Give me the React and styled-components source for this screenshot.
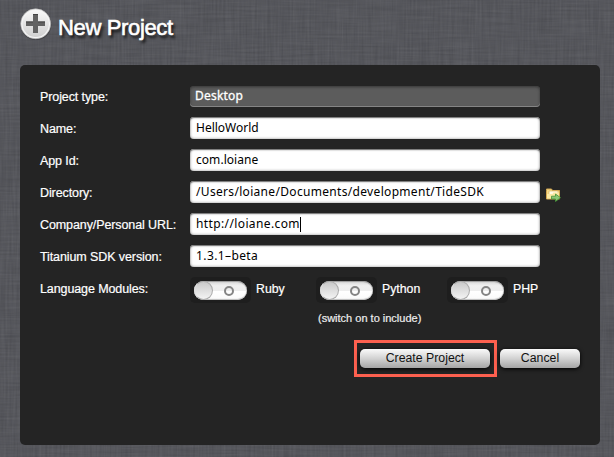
import React from "react";
import styled, { createGlobalStyle } from "styled-components";

const Global = createGlobalStyle`
  * { box-sizing: border-box; }
  html, body { margin: 0; padding: 0; }
  body { overflow: hidden; background: #55565b; font-family: "Liberation Sans", Arial, sans-serif; }
`;

const Page = styled.div`
  position: relative;
  isolation: isolate;
  width: 614px;
  height: 457px;
  padding: 0 14px 12px 20px;
  display: flex;
  flex-direction: column;
  background: #55565b;
`;

const Linen = styled.svg`
  position: absolute;
  inset: 0;
  z-index: -1;
`;

const Header = styled.header`
  height: 65px;
  flex: none;
  display: flex;
  align-items: flex-start;
  padding-top: 7px;
  gap: 6px;
`;

const Title = styled.h1`
  margin: 8px 0 0;
  font-size: 22px;
  line-height: 25px;
  font-weight: 400;
  letter-spacing: -0.35px;
  color: #fff;
  -webkit-text-stroke: 0.6px #fff;
  text-shadow: 2px 3px 3px rgba(0,0,0,.9);
  white-space: nowrap;
`;

const Panel = styled.main`
  flex: 1;
  border-radius: 5px;
  background: #242424;
  padding: 16px 20px 0;
`;

const Row = styled.div`
  height: 32px;
  display: flex;
  align-items: center;
`;

const Label = styled.label`
  width: 150px;
  flex: none;
  font-size: 12.5px;
  line-height: 16px;
  color: #fff;
  -webkit-text-stroke: 0.2px #fff;
  letter-spacing: -0.1px;
  white-space: nowrap;
`;

const Field = styled.div`
  width: 350px;
  height: ${(p) => (p.$dim ? 21 : 22)}px;
  margin-top: ${(p) => (p.$dim ? -1 : -2)}px;
  display: flex;
  align-items: center;
  padding: ${(p) => (p.$dim ? "0 5px 2px" : "0 6px")};
  border-radius: 4px;
  font: 12px/16px "Noto Sans", "Open Sans", sans-serif;
  letter-spacing: ${(p) => p.$track || 0}px;
  white-space: nowrap;
  color: ${(p) => (p.$dim ? "#fff" : "#000")};
  -webkit-text-stroke: ${(p) => (p.$dim ? "0.3px #fff" : "0")};
  background: ${(p) => (p.$dim ? "#5c5c5c" : "#fff")};
  box-shadow: ${(p) =>
    p.$dim
      ? "inset 0 -1px 0 #858585, inset 0 1px 3px #353535"
      : "inset 0 1px 1px #777, inset 0 0 3px #888"};
`;

const Caret = styled.span`
  width: 1px;
  height: 15px;
  background: #000;
`;

const FolderButton = styled.span`
  margin: 2px 0 0 5px;
  display: flex;
`;

const Module = styled.div`
  display: flex;
  align-items: center;
  width: ${(p) => p.$width}px;
  font-size: 12.3px;
  color: #fff;
  -webkit-text-stroke: 0.2px #fff;
`;

const SwitchWell = styled.span`
  width: 61px;
  height: 26px;
  margin: 2px 5px 0 0;
  padding: 4px;
  border-radius: 5px;
  background: #1e1e1e;
`;

const Track = styled.span`
  display: flex;
  align-items: center;
  justify-content: space-between;
  width: 53px;
  height: 19px;
  padding-right: 13px;
  border-radius: 10px;
  background: linear-gradient(#d6d6d6, #f0f0f0 25%, #eee 50%, #fff 55%, #fafafa);
  box-shadow: inset 0 1px 1px #999, inset 0 -1px 1px #bbb;
`;

const Knob = styled.span`
  width: 19px;
  height: 19px;
  border: 1px solid #aaa;
  border-left-color: #ddd;
  border-radius: 50%;
  background: linear-gradient(#c9c9c9, #f4f4f4);
`;

const Ring = styled.span`
  width: 10px;
  height: 10px;
  margin-top: 1px;
  border: 2px solid #858585;
  border-radius: 50%;
`;

const Hint = styled.p`
  margin: 6px 0 0 278px;
  font-size: 11px;
  line-height: 14px;
  color: #eee;
  -webkit-text-stroke: 0.2px #eee;
`;

const Actions = styled.div`
  display: flex;
  justify-content: flex-end;
  align-items: center;
  gap: 3px;
  margin-top: 15px;
`;

const Highlight = styled.div`
  width: 143px;
  height: 37px;
  border: 3px solid #fd604f;
  padding: 6px 3px;
`;

const Button = styled.button`
  display: block;
  width: ${(p) => p.$width}px;
  height: 19px;
  padding: 0;
  border: 0;
  border-radius: 5px;
  font: 12.3px/19px "Liberation Sans", Arial, sans-serif;
  color: #111;
  background: linear-gradient(#fafafa, #d2d2d2 50%, #a5a5a5);
  box-shadow: 0 1px 4px #000;
`;

function LinenTexture() {
  return (
    <Linen width="614" height="457" aria-hidden="true">
      <filter id="weft" x="0" y="0" width="100%" height="100%" colorInterpolationFilters="sRGB">
        <feTurbulence type="fractalNoise" baseFrequency="0.025 0.5" numOctaves="2" seed="4" />
        <feColorMatrix values="1 0 0 0 0  1 0 0 0 0  1 0 0 0 0  0 0 0 0 1" />
      </filter>
      <filter id="warp" x="0" y="0" width="100%" height="100%" colorInterpolationFilters="sRGB">
        <feTurbulence type="fractalNoise" baseFrequency="0.5 0.025" numOctaves="2" seed="9" />
        <feColorMatrix values="1 0 0 0 0  1 0 0 0 0  1 0 0 0 0  0 0 0 0 1" />
      </filter>
      <rect width="614" height="457" fill="#515258" />
      <rect width="614" height="457" filter="url(#weft)" opacity=".06" />
      <rect width="614" height="457" filter="url(#warp)" opacity=".06" />
    </Linen>
  );
}

function AddIcon() {
  return (
    <svg width="32" height="34" viewBox="0 0 32 34">
      <defs>
        <linearGradient id="disc" x1="0" y1="0" x2="0" y2="1">
          <stop offset="0" stopColor="#f8f8f8" />
          <stop offset="1" stopColor="#d0d0d0" />
        </linearGradient>
      </defs>
      <circle cx="16" cy="17.5" r="15.4" fill="#29292b" opacity=".5" />
      <circle cx="15.7" cy="16.8" r="15" fill="#f5f5f5" stroke="#b0b0b0" strokeWidth=".6" />
      <circle cx="15.7" cy="16.8" r="13.2" fill="url(#disc)" />
      <path d="M13 7h5v7.500h7v4.500h-7V26h-5v-7H6v-4.500h7z" fill="#626262" />
      <path d="M13 7.500h5M6 15h7M18 15h7" stroke="#444" fill="none" />
    </svg>
  );
}

function FolderIcon() {
  return (
    <svg width="16" height="15" viewBox="0 0 16 15">
      <path d="M1.500 3.500V2h5l1 1.500h7V12h-13z" fill="#f3d888" stroke="#d2a650" />
      <path d="M4 4h9v4H4z" fill="#fffbe8" stroke="#dcb965" strokeWidth=".7" />
      <path d="M2 11.500V7h5.500l1-1.500H14v6z" fill="#fae8a4" />
      <path d="M6.500 9.200h4V7l5 3.700-5 3.800V12h-4z" fill="#8cc676" stroke="#429336" strokeWidth=".8" />
    </svg>
  );
}

const fields = [
  { label: "Project type:", value: "Desktop", dim: true, track: 0.2 },
  { label: "Name:", value: "HelloWorld", track: 0 },
  { label: "App Id:", value: "com.loiane", track: 0.05 },
  { label: "Directory:", value: "/Users/loiane/Documents/development/TideSDK", track: 0.32, browse: true },
  { label: "Company/Personal URL:", value: "http://loiane.com", track: 0.38, focused: true },
  { label: "Titanium SDK version:", value: "1.3.1–beta", track: 0.4 },
];

const modules = [
  { name: "Ruby", width: 126 },
  { name: "Python", width: 131 },
  { name: "PHP", width: 100 },
];

export default function App() {
  return (
    <>
      <Global />
      <Page>
        <LinenTexture />
        <Header>
          <AddIcon />
          <Title>New Project</Title>
        </Header>
        <Panel>
          {fields.map((f) => (
            <Row key={f.label}>
              <Label>{f.label}</Label>
              <Field $dim={f.dim} $track={f.track}>
                {f.value}
                {f.focused && <Caret />}
              </Field>
              {f.browse && <FolderButton><FolderIcon /></FolderButton>}
            </Row>
          ))}
          <Row>
            <Label>Language Modules:</Label>
            {modules.map((m) => (
              <Module key={m.name} $width={m.width}>
                <SwitchWell><Track><Knob /><Ring /></Track></SwitchWell>
                {m.name}
              </Module>
            ))}
          </Row>
          <Hint>(switch on to include)</Hint>
          <Actions>
            <Highlight><Button $width={130}>Create Project</Button></Highlight>
            <Button $width={80}>Cancel</Button>
          </Actions>
        </Panel>
      </Page>
    </>
  );
}
